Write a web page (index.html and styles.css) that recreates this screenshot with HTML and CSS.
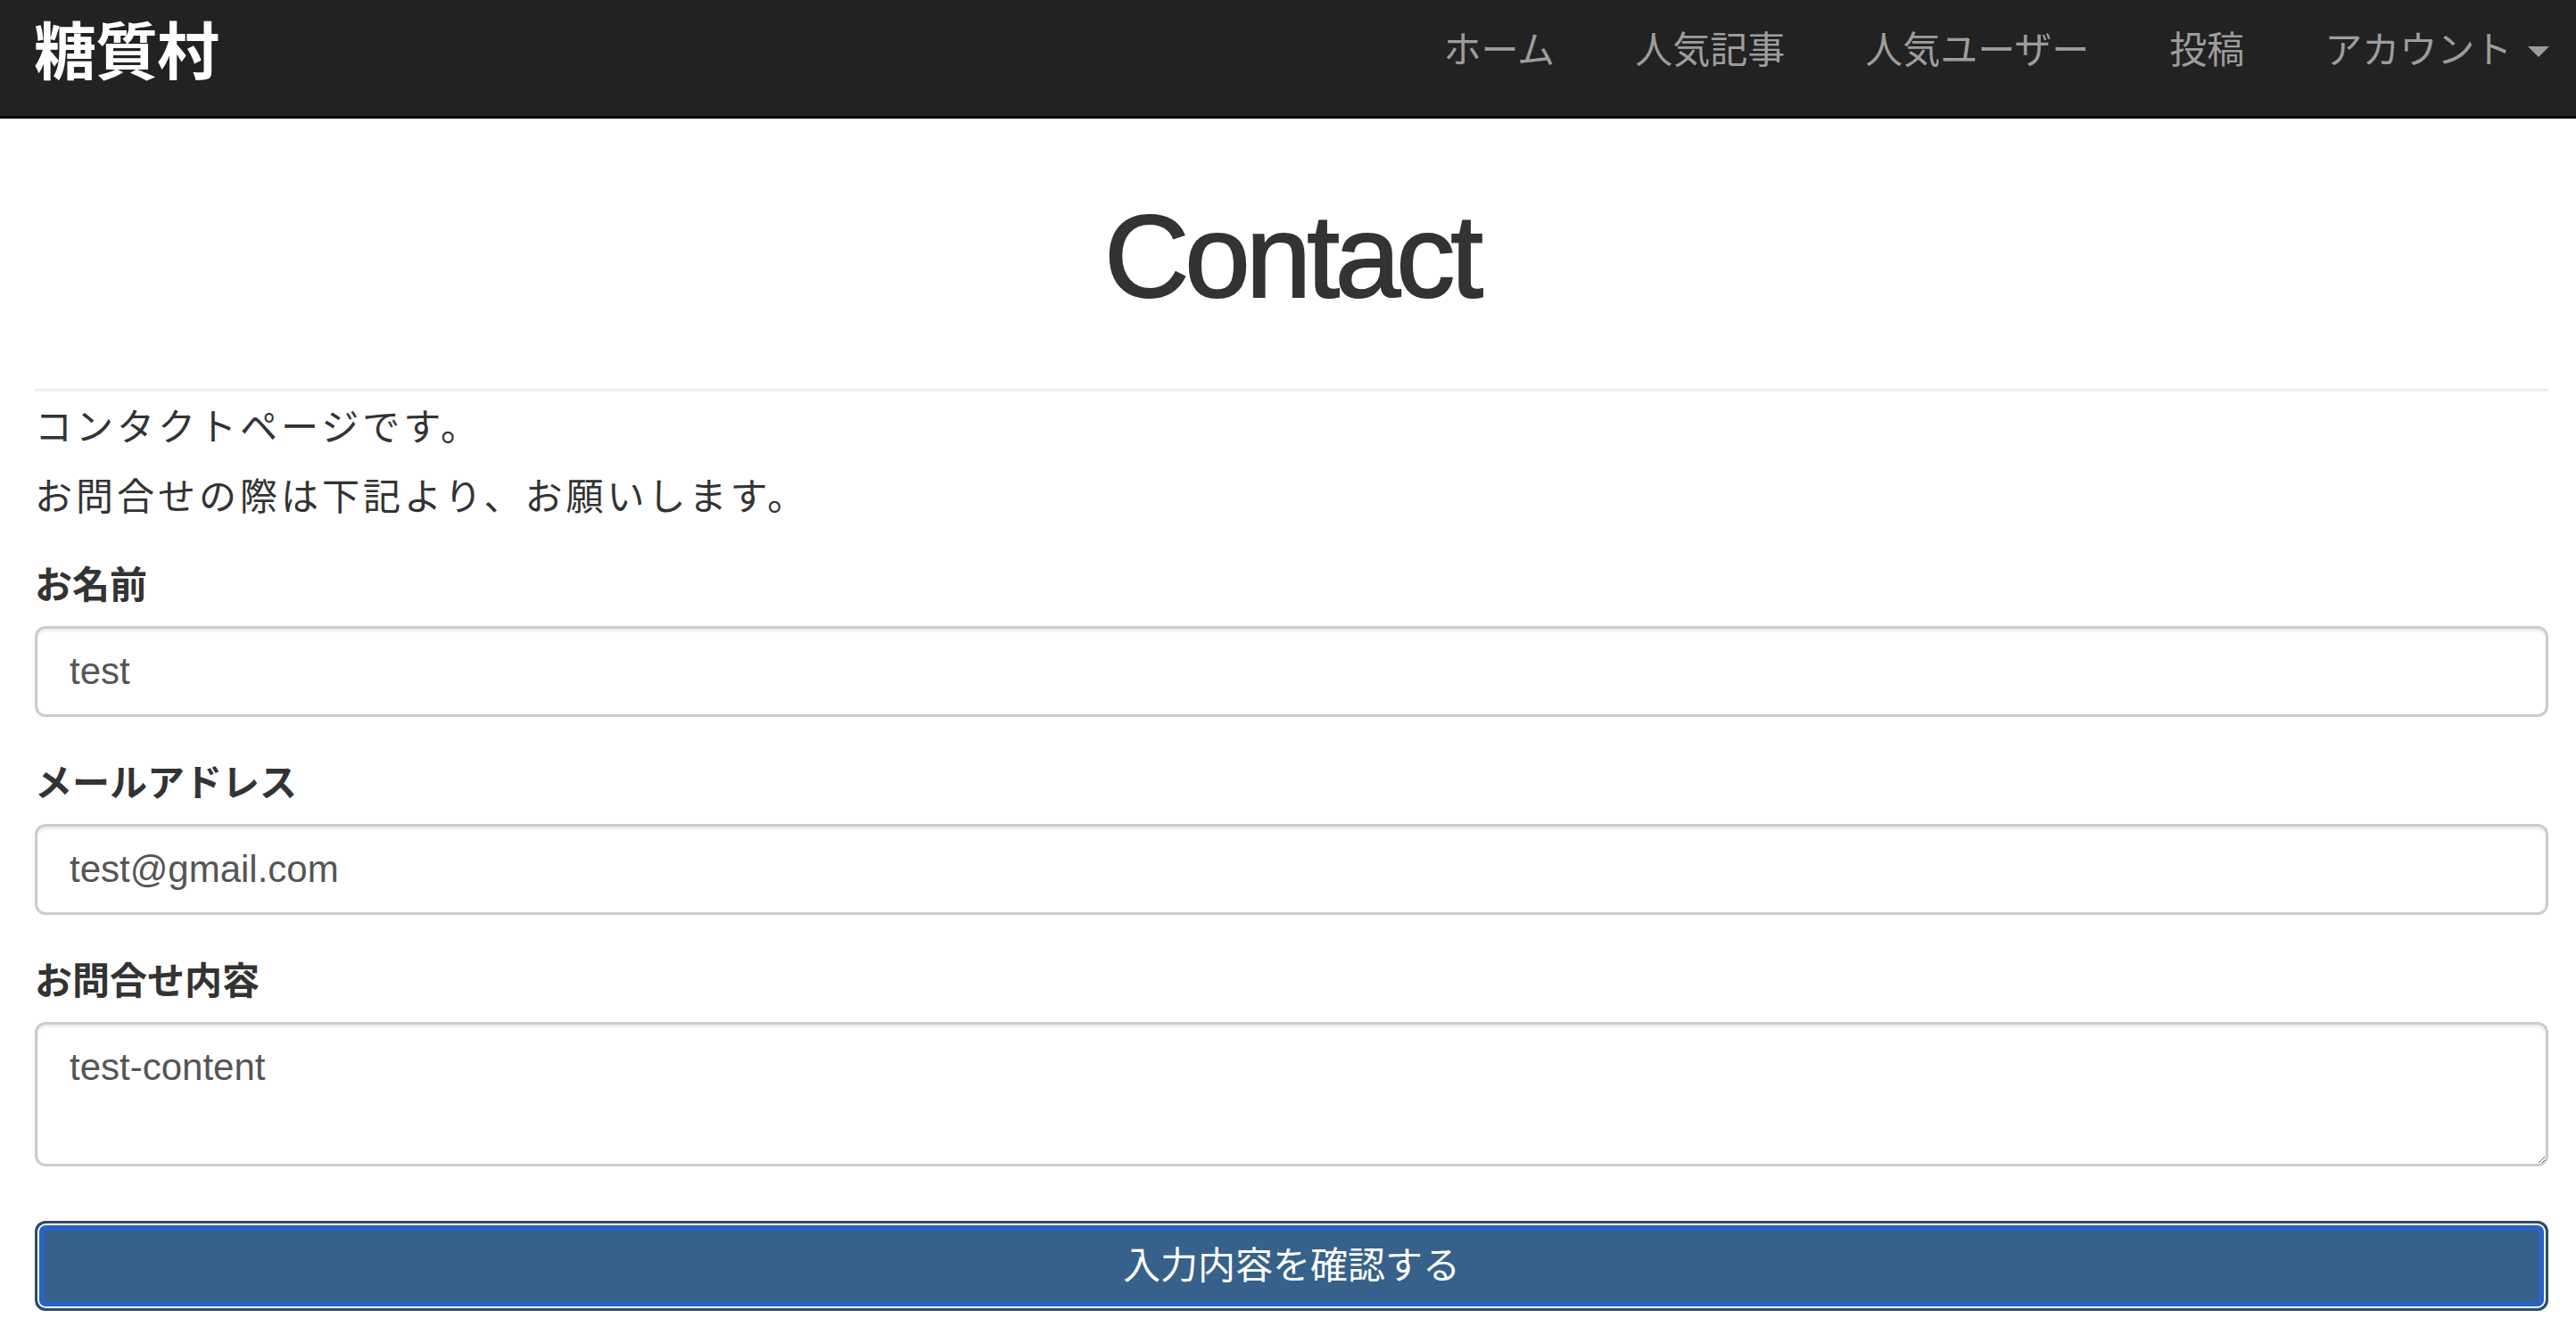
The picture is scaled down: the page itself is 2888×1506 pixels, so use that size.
FILE: index.html
```html
<!DOCTYPE html>
<html lang="ja">
<head>
<meta charset="utf-8">
<title>Contact | 糖質村</title>
<link rel="stylesheet" href="styles.css">
</head>
<body>
<header class="navbar">
  <a class="brand" href="#">糖質村</a>
  <nav class="nav">
    <a class="nav-link" href="#">ホーム</a>
    <a class="nav-link" href="#">人気記事</a>
    <a class="nav-link" href="#">人気ユーザー</a>
    <a class="nav-link" href="#">投稿</a>
    <a class="nav-link nav-last" href="#">アカウント <span class="caret"></span></a>
  </nav>
</header>
<main class="container">
  <div class="page-header">
    <h1 class="title">Contact</h1>
  </div>
  <div class="intro">
    <p class="intro-line">コンタクトページです。</p>
    <p class="intro-line">お問合せの際は下記より、お願いします。</p>
  </div>
  <form class="contact-form">
    <div class="form-group">
      <label class="form-label" for="name">お名前</label>
      <input class="form-control" id="name" type="text" value="test">
    </div>
    <div class="form-group">
      <label class="form-label" for="email">メールアドレス</label>
      <input class="form-control" id="email" type="text" value="test@gmail.com">
    </div>
    <div class="form-group">
      <label class="form-label" for="content">お問合せ内容</label>
      <textarea class="form-control form-textarea" id="content">test-content</textarea>
    </div>
    <button class="btn-primary" type="button">入力内容を確認する</button>
  </form>
</main>
</body>
</html>
```
FILE: styles.css
```css
html, body {
  margin: 0;
  padding: 0;
  background: #fff;
}

body {
  font-family: "Liberation Sans", "Noto Sans CJK JP", sans-serif;
  font-size: 42px;
  color: #333;
}

a {
  text-decoration: none;
}

.navbar {
  display: flex;
  justify-content: space-between;
  align-items: flex-start;
  height: 130px;
  padding: 0 30px 0 38px;
  background: #222;
  border-bottom: 3px solid #080808;
}

.brand {
  display: block;
  padding-top: 20px;
  font-size: 70px;
  line-height: 80px;
  font-weight: 700;
  color: #fff;
  letter-spacing: -1px;
}

.nav {
  display: flex;
  align-items: flex-start;
}

.nav-link {
  display: block;
  padding: 27px 45px 0;
  font-size: 42px;
  line-height: 60px;
  color: #9d9d9d;
}

.nav-last {
  padding-right: 0;
}

.caret {
  display: inline-block;
  width: 0;
  height: 0;
  margin-left: 6px;
  vertical-align: middle;
  border-top: 12px solid #9d9d9d;
  border-left: 12px solid transparent;
  border-right: 12px solid transparent;
  position: relative;
  top: -2px;
}

.container {
  padding: 0 31px 0 39px;
}

.page-header {
  margin-top: 82px;
  padding-bottom: 76px;
  border-bottom: 3px solid #eee;
}

.title {
  margin: 0;
  text-align: center;
  font-family: "Liberation Sans", sans-serif;
  font-size: 132px;
  line-height: 145px;
  font-weight: 400;
  letter-spacing: -5px;
  -webkit-text-stroke: 2px #333;
  color: #333;
}

.intro {
  margin-top: 2px;
}

.intro-line {
  margin: 0;
  line-height: 78px;
  letter-spacing: 4px;
  color: #333;
}

.contact-form {
  margin-top: 30px;
}

.form-group {
  margin-bottom: 45px;
}

.form-label {
  display: inline-block;
  margin-bottom: 15px;
  font-weight: 700;
  line-height: 60px;
  color: #333;
}

.form-control {
  display: block;
  box-sizing: border-box;
  width: 100%;
  height: 102px;
  margin: 0;
  padding: 18px 36px;
  font-family: "Liberation Sans", "Noto Sans CJK JP", sans-serif;
  font-size: 42px;
  line-height: 60px;
  color: #555;
  background: #fff;
  border: 3px solid #ccc;
  border-radius: 12px;
  box-shadow: inset 0 3px 3px rgba(0, 0, 0, 0.075);
  outline: none;
}

.form-textarea {
  height: 162px;
  resize: vertical;
}

.btn-primary {
  display: block;
  box-sizing: border-box;
  width: 100%;
  height: 101px;
  margin-top: 61px;
  padding: 0;
  font-family: "Liberation Sans", "Noto Sans CJK JP", sans-serif;
  font-size: 42px;
  line-height: 60px;
  color: #fff;
  background: #36618b;
  border: 3px solid #2d4c6f;
  border-radius: 12px;
  box-shadow: inset 0 0 0 2px #fff, inset 0 0 0 8px #2a62c6;
  cursor: pointer;
}
```
